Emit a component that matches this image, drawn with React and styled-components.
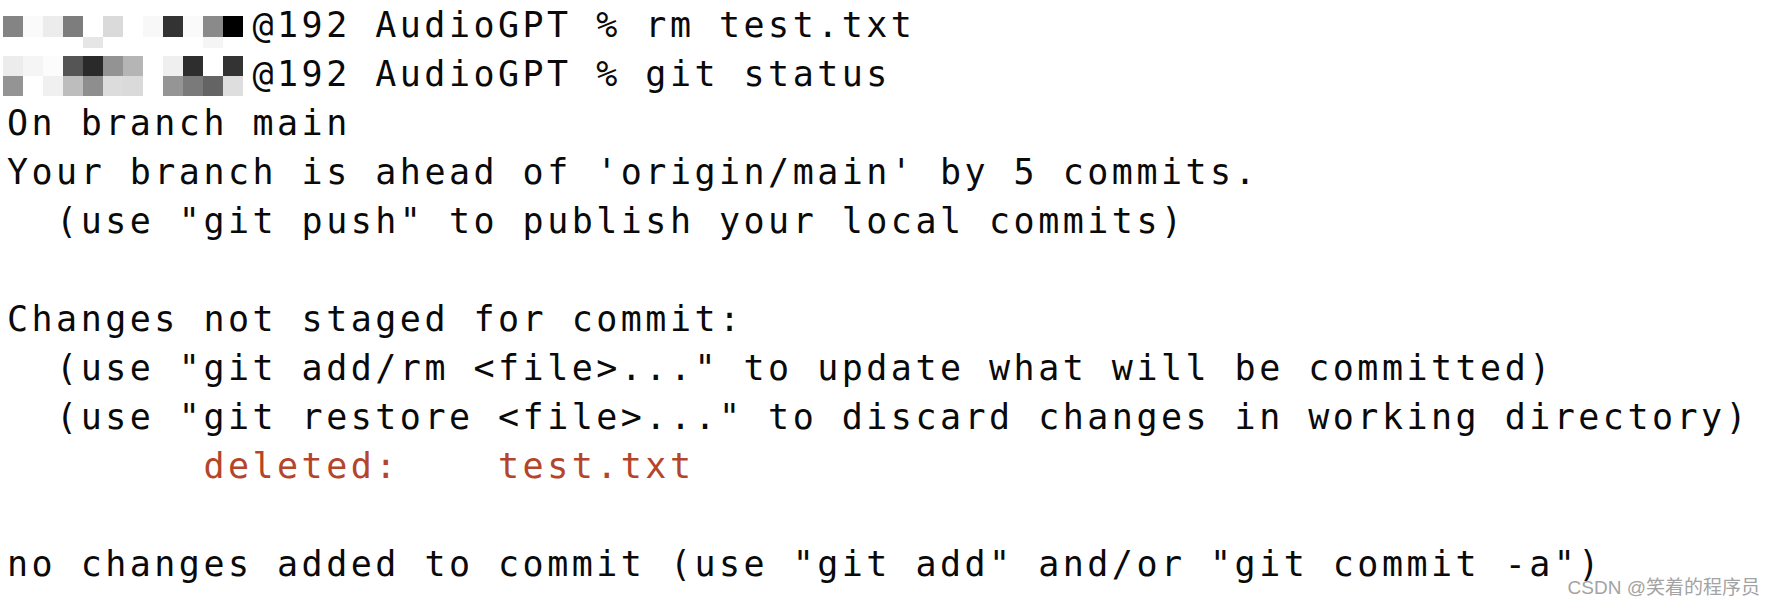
import styled, { createGlobalStyle } from "styled-components";

const GlobalStyle = createGlobalStyle`
  html, body {
    margin: 0;
    padding: 0;
    background: #ffffff;
  }
`;

// blurred user name in front of each prompt, drawn as a grey mosaic
const prompts = [
  {
    top: 15,
    cmd: "@192 AudioGPT % rm test.txt",
    rows: [
      ["#848484", "#fafafa", "#ececec", "#7d7d7d", "#ffffff", "#dadada", "#ffffff", "#f8f8f8", "#333333", "#fafafa", "#8a8a8a", "#000000"],
      ["#ffffff", "#ffffff", "#ffffff", "#ffffff", "#e6e6e6", "#ffffff", "#ffffff", "#ffffff", "#ffffff", "#ffffff", "#f5f5f5", "#ffffff"],
    ],
    rowHeight: [21, 11],
  },
  {
    top: 6,
    cmd: "@192 AudioGPT % git status",
    rows: [
      ["#ececec", "#f5f5f5", "#fcfcfc", "#555555", "#2a2a2a", "#939393", "#b5b5b5", "#ffffff", "#efefef", "#2e2e2e", "#ffffff", "#333333"],
      ["#949494", "#ffffff", "#f0f0f0", "#bdbdbd", "#8e8e8e", "#dcdcdc", "#dadada", "#ffffff", "#959595", "#7a7a7a", "#646464", "#dedede"],
    ],
    rowHeight: [20, 20],
  },
];

const output = [
  { text: "On branch main" },
  { text: "Your branch is ahead of 'origin/main' by 5 commits." },
  { text: '  (use "git push" to publish your local commits)' },
  { text: "" },
  { text: "Changes not staged for commit:" },
  { text: '  (use "git add/rm <file>..." to update what will be committed)' },
  { text: '  (use "git restore <file>..." to discard changes in working directory)' },
  { text: "        deleted:    test.txt", red: true },
  { text: "" },
  { text: 'no changes added to commit (use "git add" and/or "git commit -a")' },
];

const App = () => {
  return (
    <>
      <GlobalStyle />
      <Screen>
        <Terminal>
          {prompts.map((p, i) => (
            <PromptLine key={i}>
              <Mosaic $top={p.top}>
                {p.rows.map((row, r) => (
                  <MosaicRow key={r} $h={p.rowHeight[r]}>
                    {row.map((c, k) => (
                      <Cell key={k} $c={c} />
                    ))}
                  </MosaicRow>
                ))}
              </Mosaic>
              <Line>{p.cmd}</Line>
            </PromptLine>
          ))}
          {output.map((l, i) => (
            <Line key={i} $red={l.red}>
              {l.text || " "}
            </Line>
          ))}
        </Terminal>
        <Watermark>CSDN @笑着的程序员</Watermark>
      </Screen>
    </>
  );
};

const Screen = styled.div`
  position: relative;
  width: 1776px;
  height: 608px;
  overflow: hidden;
  background: #ffffff;
`;

const Terminal = styled.div`
  display: flex;
  flex-direction: column;
  padding: 1px 0 0 7px;
  font-family: "DejaVu Sans Mono", "Liberation Mono", monospace;
  font-size: 35px;
  letter-spacing: 3.48px;
  color: #0a0a0a;
`;

const PromptLine = styled.div`
  display: flex;
  height: 49px;
`;

const Line = styled.div`
  height: 49px;
  line-height: 49px;
  white-space: pre;
  color: ${({ $red }) => ($red ? "#b4452b" : "#0a0a0a")};
`;

const Mosaic = styled.div`
  width: 249.5px;
  margin: ${({ $top }) => $top}px 0 0 -4px;
  display: flex;
  flex-direction: column;
  align-self: flex-start;
`;

const MosaicRow = styled.div`
  display: grid;
  grid-template-columns: repeat(12, 20px);
  height: ${({ $h }) => $h}px;
`;

const Cell = styled.span`
  background: ${({ $c }) => $c};
  filter: blur(0.4px);
`;

const Watermark = styled.div`
  position: absolute;
  right: 16px;
  bottom: 9px;
  font-family: "Liberation Sans", "Noto Sans CJK SC", sans-serif;
  font-size: 19px;
  color: #a3a3a3;
`;

export default App;
